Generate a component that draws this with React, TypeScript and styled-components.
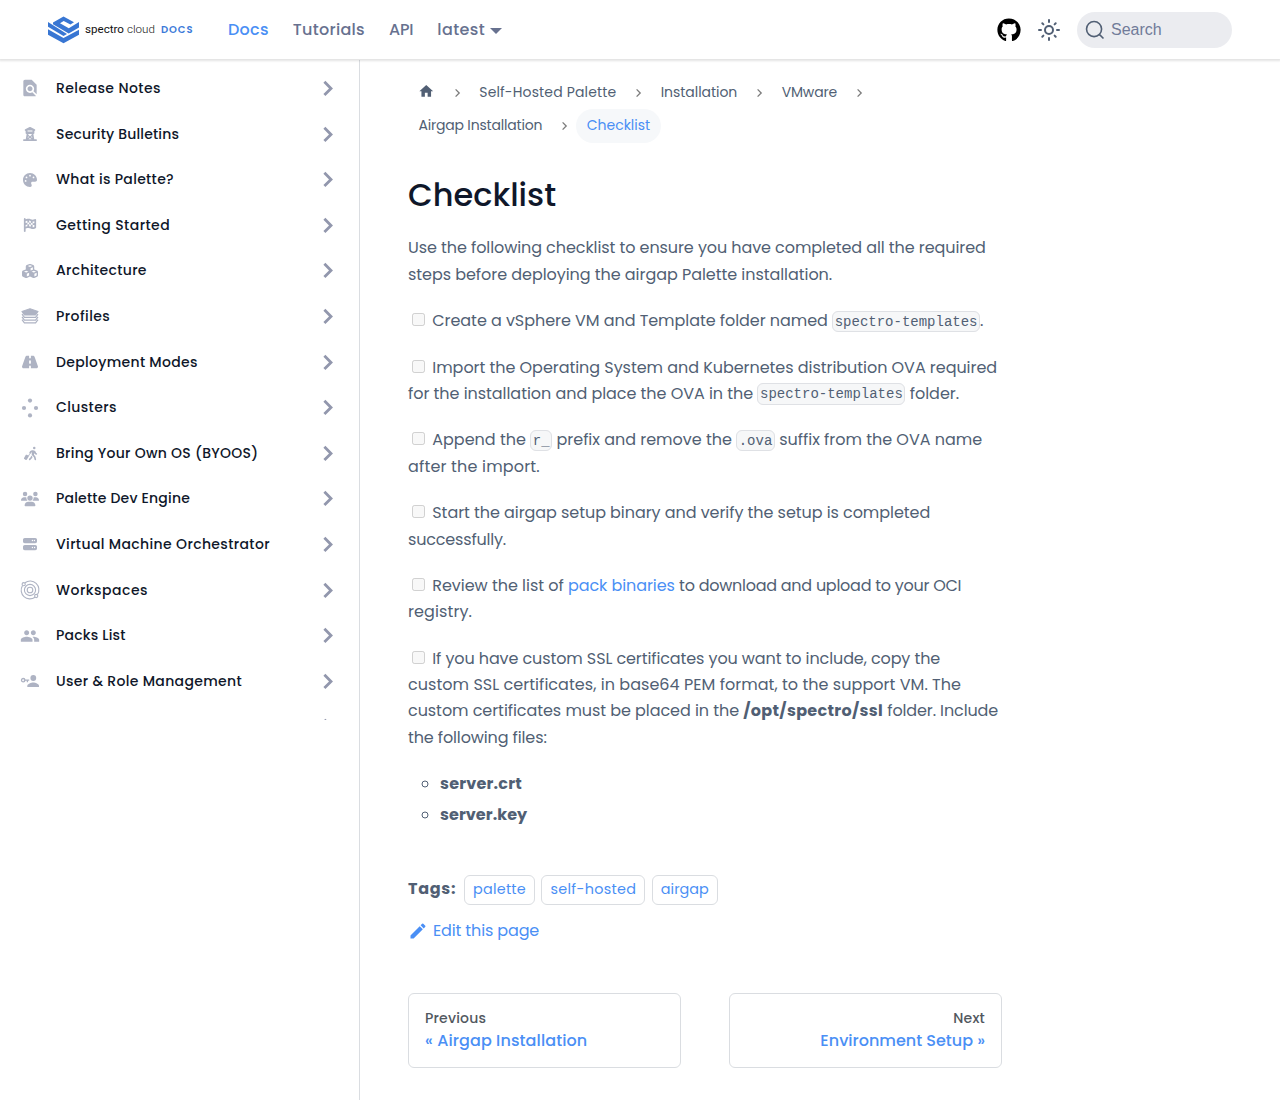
import React from "react";
import styled, { createGlobalStyle } from "styled-components";
import {
  FaCubes,
  FaFlagCheckered,
  FaGithub,
  FaPalette,
  FaPersonWalkingLuggage,
  FaRoad,
  FaServer,
  FaTowerObservation,
  FaUsers,
} from "react-icons/fa6";
import { MdEdit, MdFindInPage, MdHome, MdPeople } from "react-icons/md";

const GlobalStyle = createGlobalStyle`
  *, *::before, *::after { box-sizing: border-box; }
  html, body { margin: 0; background: #fff; }
  body {
    font-family: Poppins, Inter, "Noto Sans", sans-serif;
    font-size: 16px;
    line-height: 1.65;
    color: #515f74;
    text-rendering: optimizeLegibility;
  }
  a { color: inherit; text-decoration: none; }
`;

/* A run of text with its own tracking, in px. */
const Run = styled.span<{ $t: number }>`
  letter-spacing: ${(p) => p.$t}px;
`;

const Page = styled.div`
  display: flex;
  flex-direction: column;
  height: 1100px;
  overflow: hidden;
`;

const Navbar = styled.header`
  display: flex;
  flex: none;
  align-items: center;
  height: 59px;
  padding: 0 48px;
  background: #fff;
  box-shadow: 0 1px 2px 1px rgba(0, 0, 0, 0.11);
  z-index: 2;
`;

const Brand = styled.a`
  display: flex;
  align-items: center;
  width: 180px;
`;

const BrandName = styled.span`
  display: flex;
  gap: 3px;
  width: 76px;
  margin-left: 6px;
  padding-bottom: 2px;
  font-family: Roboto, sans-serif;
  font-size: 11.6px;
  line-height: 16px;
  color: #111;
`;

const Light = styled.span`
  font-weight: 300;
`;

const BrandTag = styled.span`
  font-size: 10px;
  font-weight: 600;
  line-height: 16px;
  letter-spacing: 0.9px;
  color: #3c7ad9;
`;

const NavLinks = styled.nav`
  display: flex;
  align-items: center;
  gap: 24px;
  flex: 1;
  padding-top: 1px;
`;

const NavLink = styled.a<{ $active?: boolean; $t: number }>`
  display: flex;
  align-items: center;
  font-weight: 500;
  letter-spacing: ${(p) => p.$t}px;
  color: ${(p) => (p.$active ? "#4a8ff5" : "#67718f")};
`;

const Caret = styled.span`
  flex: none;
  margin: 2px 0 0 5px;
  border: 6.4px solid transparent;
  border-top-color: currentColor;
  border-bottom: 0;
`;

const NavTools = styled.div`
  display: flex;
  align-items: center;
  gap: 16px;
  padding-top: 1px;
`;

const SearchButton = styled.button`
  display: flex;
  align-items: center;
  gap: 6px;
  width: 155px;
  height: 36px;
  padding: 0 8px;
  border: 0;
  border-radius: 18px;
  background: #ebecf0;
  font: 16px "Liberation Sans", Arial, sans-serif;
  color: #717b99;
`;

const Columns = styled.div`
  display: flex;
  flex: 1;
  padding-top: 1px;
`;

const Sidebar = styled.aside`
  width: 360px;
  border-right: 1px solid #dadde1;
`;

const Menu = styled.div`
  height: 660px;
  padding-top: 5.2px;
  overflow: hidden;
`;

const MenuRow = styled.a`
  display: flex;
  align-items: center;
  height: 45.6px;
  padding: 0 25px 0 20px;
`;

const MenuIcon = styled.span<{ $size: number }>`
  display: flex;
  justify-content: center;
  width: 20px;
  margin: 1px 16px 0 0;
  font-size: ${(p) => p.$size}px;
  color: #aeb3c3;
`;

const MenuLabel = styled.span<{ $t: number }>`
  flex: 1;
  font-size: 14px;
  font-weight: 500;
  line-height: 20px;
  letter-spacing: ${(p) => p.$t}px;
  color: #0f172a;
`;

const Article = styled.main`
  display: flex;
  flex-direction: column;
  width: 642px;
  padding: 16px 0 0 48px;
`;

const CrumbRow = styled.div`
  display: flex;
  align-items: center;
  height: 33.3px;
  font-size: 14px;
`;

const Crumb = styled.a<{ $current?: boolean; $t?: number }>`
  display: flex;
  align-items: center;
  height: 34px;
  padding: 0 11px 1px 10.4px;
  border-radius: 17px;
  letter-spacing: ${(p) => p.$t ?? 0}px;
  background: ${(p) => (p.$current ? "#f6f8fa" : "transparent")};
  color: ${(p) => (p.$current ? "#4a8ff5" : "#515f74")};
`;

const HomeIcon = styled(MdHome)`
  margin-bottom: 2px;
`;

const CrumbArrow = styled.svg`
  flex: none;
  margin: 1px 8px 0;
`;

const Title = styled.h1`
  margin: 32.8px 0 20px;
  font-size: 32px;
  font-weight: 500;
  line-height: 40px;
  color: #0f172a;
`;

const Paragraph = styled.p`
  margin: 0 0 20px;
`;

const Check = styled.input.attrs({ type: "checkbox", disabled: true })``;

const Code = styled.code`
  padding: 1.6px;
  border: 1px solid #dfe1e5;
  border-radius: 6px;
  background: #f6f7f8;
  font-family: "Liberation Mono", monospace;
  font-size: 14px;
  vertical-align: middle;
`;

const Link = styled.a`
  color: #4a8ff5;
`;

const Bold = styled(Run).attrs({ as: "b" })``;

const FileList = styled.ul`
  display: flex;
  flex-direction: column;
  gap: 4.4px;
  margin: 0 0 46.5px;
  padding-left: 32px;
  list-style: circle;
`;

const Tags = styled.div`
  display: flex;
  align-items: center;
  height: 30px;
`;

const TagsLabel = styled(Bold)`
  width: 56px;
  padding-bottom: 1px;
`;

const Tag = styled.a<{ $t: number }>`
  height: 30px;
  margin-right: 6.4px;
  padding: 0 8px;
  border: 1px solid #dadde1;
  border-radius: 6px;
  font-size: 14.4px;
  line-height: 27px;
  letter-spacing: ${(p) => p.$t}px;
  color: #4a8ff5;
`;

const EditLink = styled.a`
  display: flex;
  align-items: center;
  gap: 5px;
  margin-top: 13px;
  letter-spacing: -0.14px;
  color: #4a8ff5;
`;

const Pagination = styled.nav`
  display: grid;
  grid-template-columns: 1fr 1fr;
  gap: 48px;
  margin-top: 49px;
`;

const PageCard = styled.a<{ $end?: boolean }>`
  display: flex;
  flex-direction: column;
  align-items: ${(p) => (p.$end ? "flex-end" : "flex-start")};
  height: 75px;
  padding: 15px 16px;
  border: 1px solid #dadde1;
  border-radius: 6px;
  font-weight: 500;
`;

const CardHint = styled(Run)`
  font-size: 14px;
  line-height: 18px;
  color: #525860;
`;

const CardTitle = styled(Run)`
  line-height: 27px;
  color: #4a8ff5;
`;

const Logo = () => (
  <svg width="31" height="28" viewBox="0 0 31 28" fill="#3876d3">
    <path d="M15.5.5 26 6.3l-3.6 2.3-6.7-3.5L12 7.2l8.8 5L31 6V11.6l-10.3 6L5 8.2V6.4z" />
    <path d="M0 5.9 19 17.9 15.5 20 0 10.8z" />
    <path d="M0 13.2l15.5 8.9L31 13.8v5L15.5 27.3 0 18.8z" />
  </svg>
);

const SunIcon = () => (
  <svg width="24" height="24" viewBox="0 0 24 24" fill="none" stroke="#515f74" strokeWidth="2" strokeLinecap="round">
    <circle cx="12" cy="12" r="4" />
    <path d="M12 2v2M12 20v2M2 12h2M20 12h2M5.3 5.3l1.1 1.1M17.6 17.6l1.1 1.1M5.3 18.7l1.1-1.1M17.6 6.4l1.1-1.1" />
  </svg>
);

const SearchIcon = () => (
  <svg width="20" height="20" viewBox="0 0 20 20" fill="none" stroke="#515f74" strokeWidth="1.6">
    <path d="M14.386 14.386l4.0877 4.0877-4.0877-4.0877c-2.9418 2.9419-7.7115 2.9419-10.6533 0-2.9419-2.9418-2.9419-7.7115 0-10.6533 2.9418-2.9419 7.7115-2.9419 10.6533 0 2.9419 2.9418 2.9419 7.7115 0 10.6533z" />
  </svg>
);

const LayersIcon = () => (
  <svg width="18" height="16" viewBox="0 0 18 16" fill="none" stroke="currentColor" strokeWidth="1.2" strokeLinejoin="round">
    <path d="M9 .8 17 3.5 14.5 7h-11L1 3.5z" fill="currentColor" />
    <path d="M1 6.2 3.4 9.4h11.2L17 6.2M1 8.9l2.4 3.2h11.2L17 8.9M1 11.6l2.4 3.2h11.2l2.4-3.2" />
  </svg>
);

const DotsIcon = () => (
  <svg width="18" height="20" viewBox="0 0 18 20" fill="currentColor">
    <circle cx="9" cy="2.6" r="2.1" />
    <circle cx="3" cy="10" r="2.1" />
    <circle cx="15" cy="10" r="2.1" />
    <circle cx="9" cy="17.4" r="2.1" />
  </svg>
);

const OrbitIcon = () => (
  <svg width="20" height="20" viewBox="0 0 20 20" fill="none" stroke="currentColor" strokeWidth="1.1">
    <path d="M5 2.7A8.7 8.7 0 0 1 17.5 14.4M15 17.2A8.7 8.7 0 0 1 2.4 5.7" />
    <circle cx="10" cy="10" r="5.6" />
    <circle cx="10" cy="10" r="2.8" />
    <circle cx="3.7" cy="4.2" r="1.6" />
    <circle cx="16.2" cy="16" r="1.6" />
  </svg>
);

const KeyUserIcon = () => (
  <svg width="20" height="14" viewBox="0 0 20 14" fill="currentColor">
    <circle cx="13.3" cy="4" r="2.9" />
    <path d="M7.3 13v-1.3c0-2 4-3.3 6-3.3s5.7 1.3 5.7 3.3V13z" />
    <path d="M3.8 6.2h5.4M7.4 6.2v2" fill="none" stroke="currentColor" strokeWidth="1.3" />
    <circle cx="3.2" cy="6.2" r="1.7" fill="none" stroke="currentColor" strokeWidth="1.3" />
  </svg>
);

const Chevron = () => (
  <svg width="12" height="18" viewBox="0 0 12 18" fill="none" stroke="#9297ad" strokeWidth="2.8">
    <path d="M2.4 2.7 9 9.4 2.4 16.1" />
  </svg>
);

const Arrow = () => (
  <CrumbArrow width="7" height="10" viewBox="0 0 7 10" fill="none" stroke="#7b7b7b" strokeWidth="1.3">
    <path d="M1.6 1.4 5.2 5 1.6 8.6" />
  </CrumbArrow>
);

type Entry = { label: string; t: number; icon: React.ReactNode; size?: number };

const menu: Entry[] = [
  { label: "Release Notes", t: 0.42, icon: <MdFindInPage />, size: 20 },
  { label: "Security Bulletins", t: 0.17, icon: <FaTowerObservation /> },
  { label: "What is Palette?", t: 0.31, icon: <FaPalette /> },
  { label: "Getting Started", t: 0.43, icon: <FaFlagCheckered /> },
  { label: "Architecture", t: 0.33, icon: <FaCubes />, size: 16 },
  { label: "Profiles", t: 0.43, icon: <LayersIcon /> },
  { label: "Deployment Modes", t: 0.31, icon: <FaRoad />, size: 16 },
  { label: "Clusters", t: 0.37, icon: <DotsIcon /> },
  { label: "Bring Your Own OS (BYOOS)", t: 0.28, icon: <FaPersonWalkingLuggage />, size: 15 },
  { label: "Palette Dev Engine", t: 0.2, icon: <FaUsers />, size: 18 },
  { label: "Virtual Machine Orchestrator", t: 0.36, icon: <FaServer /> },
  { label: "Workspaces", t: 0.5, icon: <OrbitIcon /> },
  { label: "Packs List", t: 0.2, icon: <MdPeople />, size: 20 },
  { label: "User & Role Management", t: 0.32, icon: <KeyUserIcon /> },
  { label: "", t: 0, icon: null },
];

export default function App() {
  return (
    <Page>
      <GlobalStyle />
      <Navbar>
        <Brand href="#">
          <Logo />
          <BrandName>
            <span>spectro</span>
            <Light>cloud</Light>
          </BrandName>
          <BrandTag>DOCS</BrandTag>
        </Brand>
        <NavLinks>
          <NavLink href="#" $active $t={0.25}>Docs</NavLink>
          <NavLink href="#" $t={0.3}>Tutorials</NavLink>
          <NavLink href="#" $t={-0.2}>API</NavLink>
          <NavLink href="#" $t={0.4}>latest<Caret /></NavLink>
        </NavLinks>
        <NavTools>
          <FaGithub size={24} color="#000" />
          <SunIcon />
          <SearchButton><SearchIcon />Search</SearchButton>
        </NavTools>
      </Navbar>
      <Columns>
        <Sidebar>
          <Menu>
            {menu.map((m) => (
              <MenuRow key={m.label} href="#">
                <MenuIcon $size={m.size ?? 14}>{m.icon}</MenuIcon>
                <MenuLabel $t={m.t}>{m.label}</MenuLabel>
                <Chevron />
              </MenuRow>
            ))}
          </Menu>
        </Sidebar>
        <Article>
          <CrumbRow>
            <Crumb href="#"><HomeIcon size={16.5} /></Crumb>
            <Arrow />
            <Crumb href="#" $t={0.15}>Self-Hosted Palette</Crumb>
            <Arrow />
            <Crumb href="#" $t={-0.04}>Installation</Crumb>
            <Arrow />
            <Crumb href="#" $t={-0.17}>VMware</Crumb>
            <Arrow />
          </CrumbRow>
          <CrumbRow>
            <Crumb href="#" $t={-0.18}>Airgap Installation</Crumb>
            <Arrow />
            <Crumb href="#" $current>Checklist</Crumb>
          </CrumbRow>
          <Title>Checklist</Title>
          <Paragraph>
            <Run $t={-0.082}>Use the following checklist to ensure you have completed all the required</Run>{" "}
            <Run $t={-0.05}>steps before deploying the airgap Palette installation.</Run>
          </Paragraph>
          <Paragraph>
            <Check /> <Run $t={-0.055}>Create a vSphere VM and Template folder named</Run>{" "}
            <Code>spectro-templates</Code>.
          </Paragraph>
          <Paragraph>
            <Check />{" "}
            <Run $t={-0.045}>
              Import the Operating System and Kubernetes distribution OVA required for the
              installation and place the OVA in the
            </Run>{" "}
            <Code>spectro-templates</Code> folder.
          </Paragraph>
          <Paragraph>
            <Check /> Append the <Code>r_</Code>{" "}
            <Run $t={-0.02}>prefix and remove the</Run> <Code>.ova</Code>{" "}
            <Run $t={-0.02}>suffix from the OVA name</Run> <Run $t={0.17}>after the import.</Run>
          </Paragraph>
          <Paragraph>
            <Check />{" "}
            <Run $t={-0.06}>Start the airgap setup binary and verify the setup is completed</Run>{" "}
            <Run $t={-0.18}>successfully.</Run>
          </Paragraph>
          <Paragraph>
            <Check /> <Run $t={-0.03}>Review the list of</Run>{" "}
            <Link href="#"><Run $t={-0.08}>pack binaries</Run></Link>{" "}
            <Run $t={-0.26}>to download and upload to your OCI</Run>
            <br />
            <Run $t={0.1}>registry.</Run>
          </Paragraph>
          <Paragraph>
            <Check />{" "}
            <Run $t={-0.105}>If you have custom SSL certificates you want to include, copy the</Run>
            <br />
            <Run $t={0.04}>custom SSL certificates, in base64 PEM format, to the support VM. The</Run>{" "}
            <Run $t={-0.06}>custom certificates must be placed in the</Run>{" "}
            <Bold $t={0.31}>/opt/spectro/ssl</Bold>{" "}
            <Run $t={-0.12}>folder. Include the following files:</Run>
          </Paragraph>
          <FileList>
            <li><Bold $t={0.2}>server.crt</Bold></li>
            <li><Bold $t={0.05}>server.key</Bold></li>
          </FileList>
          <Tags>
            <TagsLabel $t={0.7}>Tags:</TagsLabel>
            <Tag href="#" $t={0.24}>palette</Tag>
            <Tag href="#" $t={0.32}>self-hosted</Tag>
            <Tag href="#" $t={0.05}>airgap</Tag>
          </Tags>
          <EditLink href="#"><MdEdit size={20} />Edit this page</EditLink>
          <Pagination>
            <PageCard href="#">
              <CardHint $t={0.2}>Previous</CardHint>
              <CardTitle $t={0.1}>« Airgap Installation</CardTitle>
            </PageCard>
            <PageCard href="#" $end>
              <CardHint $t={0.2}>Next</CardHint>
              <CardTitle $t={0}>Environment Setup »</CardTitle>
            </PageCard>
          </Pagination>
        </Article>
      </Columns>
    </Page>
  );
}
